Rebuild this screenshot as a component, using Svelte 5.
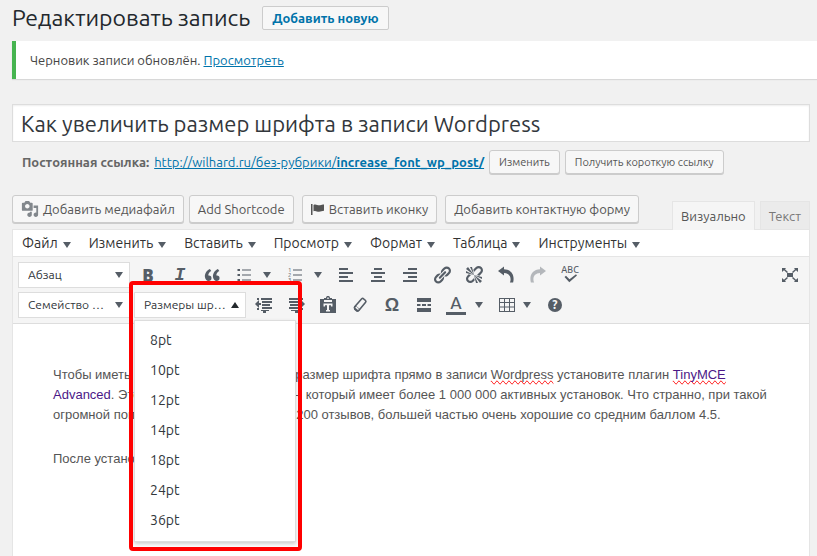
<script lang="ts">
  let title = $state('Как увеличить размер шрифта в записи Wordpress');
  let sizesOpen = $state(true);

  const menus = ['Файл', 'Изменить', 'Вставить', 'Просмотр', 'Формат', 'Таблица', 'Инструменты'];
  const sizes = ['8pt', '10pt', '12pt', '14pt', '18pt', '24pt', '36pt'];
</script>

{#snippet tool(name: string, label: string)}
  <button class="tool {name}" type="button" aria-label={label}>
    {#if name === 'bold'}
      <b>B</b>
    {:else if name === 'italic'}
      <i>I</i>
    {:else if name === 'omega'}
      <span>Ω</span>
    {:else}
      <svg viewBox="0 0 20 20" width="20" height="20" aria-hidden="true">
        {#if name === 'quote'}
          <path d="M9.49 13.22c0-.74-.2-1.38-.61-1.9-.62-.78-1.83-.88-2.53-.72-.29-1.65 1.11-3.75 2.92-4.65L7.88 4c-2.73 1.3-5.42 4.28-4.96 8.05C3.21 14.43 4.59 16 6.54 16c.85 0 1.56-.25 2.12-.75s.83-1.18.83-2.03zm8.05 0c0-.74-.2-1.38-.61-1.9-.63-.78-1.83-.88-2.53-.72-.29-1.65 1.11-3.75 2.92-4.65L15.93 4c-2.73 1.3-5.41 4.28-4.95 8.05.29 2.38 1.66 3.95 3.61 3.95.85 0 1.56-.25 2.12-.75s.83-1.18.83-2.03z" />
        {:else if name === 'ul'}
          <path d="M3.500 4h2.500v2H3.500zM3.500 9h2.500v2H3.500zM3.500 14h2.500v2H3.500zM8 4.500h9v1H8zM8 9.500h9v1H8zM8 14.500h9v1H8z" />
        {:else if name === 'ol'}
          <path d="M8 4.500h9v1H8zM8 9.500h9v1H8zM8 14.500h9v1H8z" />
          <text x="3" y="7">1</text><text x="3" y="12">2</text><text x="3" y="17">3</text>
        {:else if name === 'left'}
          <path d="M3 3h9v2H3zM3 7h14v2H3zM3 11h9v2H3zM3 15h14v2H3z" />
        {:else if name === 'center'}
          <path d="M6 3h8v2H6zM3 7h14v2H3zM6 11h8v2H6zM3 15h14v2H3z" />
        {:else if name === 'right'}
          <path d="M8 3h9v2H8zM3 7h14v2H3zM8 11h9v2H8zM3 15h14v2H3z" />
        {:else if name === 'link'}
          <path d="M17.74 2.76c1.68 1.69 1.68 4.41 0 6.1l-1.53 1.52c-1.12 1.12-2.7 1.47-4.14 1.09l2.62-2.61.76-.77.76-.76c.84-.84.84-2.2 0-3.04-.84-.85-2.2-.85-3.04 0l-.77.76-3.38 3.38c-.37-1.44-.02-3.02 1.1-4.14l1.52-1.53c1.69-1.68 4.42-1.68 6.1 0zM8.59 13.43l5.34-5.34c.42-.42.42-1.1 0-1.52-.44-.43-1.13-.39-1.53 0l-5.33 5.34c-.42.42-.42 1.1 0 1.52.44.43 1.13.39 1.52 0zm-.76 2.29l4.14-4.15c.38 1.44.03 3.02-1.09 4.14l-1.52 1.53c-1.69 1.68-4.41 1.68-6.1 0-1.68-1.68-1.68-4.42 0-6.1l1.53-1.52c1.12-1.12 2.7-1.47 4.14-1.1l-4.14 4.15c-.85.84-.85 2.2 0 3.05.84.84 2.2.84 3.04 0z" />
        {:else if name === 'unlink'}
          <path d="M17.74 2.26c1.68 1.69 1.68 4.41 0 6.1l-1.53 1.52c-.32.33-.69.58-1.08.77L13 10l1.69-1.64.76-.77.76-.76c.84-.84.84-2.2 0-3.04-.84-.85-2.2-.85-3.04 0l-.77.76-.76.76L10 7l-.65-2.14c.19-.38.44-.75.77-1.07l1.52-1.53c1.69-1.68 4.42-1.68 6.1 0zM2 4l8 6-6-8zm4-2l4 8-2-8H6zM2 6l8 4-8-2V6zm7.36 7.69L10 13l.74 2.35-1.38 1.39c-1.69 1.68-4.41 1.68-6.1 0-1.68-1.68-1.68-4.42 0-6.1l1.39-1.38L7 10l-.69.64-1.52 1.53c-.85.84-.85 2.2 0 3.04.84.85 2.2.85 3.04 0zM18 16l-8-6 6 8zm-4 2l-4-8 2 8h2zm4-4l-8-4 8 2v2z" />
        {:else if name === 'undo'}
          <path d="M2 6l6-4.5v2.8c6 .2 9.6 4 9.6 9.7 0 1.2-.2 2.3-.5 3.4h-3.2c.5-1.1.7-2 .7-3.2 0-3.5-2.4-6-6.6-6.2v2.5z" />
        {:else if name === 'redo'}
          <path d="M18 6l-6-4.5v2.8c-6 .2-9.6 4-9.6 9.7 0 1.2.2 2.3.5 3.4h3.2c-.5-1.1-.7-2-.7-3.2 0-3.5 2.4-6 6.6-6.2v2.5z" />
        {:else if name === 'spell'}
          <text x="10" y="8" text-anchor="middle">ABC</text>
          <path d="M4.500 12l1.500-1.200 3.500 3.500 6.500-5 1 1.300-7.700 6.600z" />
        {:else if name === 'full'}
          <path d="M7 8h6v4H7zM2 3h4L5 4.200 8 7 7 8 4 5.200 2 7zM18 3h-4l1 1.200L12 7l1 1 3-2.800L18 7zM2 17h4l-1-1.200L8 13l-1-1-3 2.800L2 13zM18 17h-4l1-1.200L12 13l1-1 3 2.800 2-1.800z" />
        {:else if name === 'outdent'}
          <path d="M3 3h2v2H3zM7 3h11v2H7zM8 6h10v2H8zM8 9h8v2H8zM8 12h10v2H8zM3 13h2v2H3zM7 15h8v1H7zM9 16h3v2H9zM1 9l4-4v3h2v2H5v3z" />
        {:else if name === 'indent'}
          <path d="M3 3h11v2H3zM15 3h2v2h-2zM3 6h9v2H3zM4 9h8v2H4zM3 12h11v2H3zM15 13h2v2h-2zM5 15h7v1H5zM9 16h3v2H9zM19 9l-4-4v3h-3v2h3v3z" />
        {:else if name === 'paste'}
          <path fill-rule="evenodd" d="M2 4h4V3h2C8 1.500 8.800 1 10 1s2 .5 2 2h2v1h4v14H2zM6 5v2h8V5zM9.300 2.500h1.400v1.400H9.300zM5.500 8.500v3H7v-1.200h2V15H8v1.500h4V15h-1v-4.700h2v1.200h1.500v-3z" />
        {:else if name === 'eraser'}
          <path class="line" d="M11.700 3.800c.6-.6 1.300-.6 1.900 0l1.900 1.700c.6.6.6 1.200.1 1.800l-6.800 8.200c-.6.6-1.200.6-1.800.1l-2.200-2c-.6-.6-.6-1.200-.1-1.800z" />
          <path d="M4 12l1.500-1.500 4.700 3.700-2 2.500H6.500L4 14.500z" />
          <path class="shine" d="M5.800 12.200l2.700 2.300" />
        {:else if name === 'more'}
          <path d="M3 3h14v4H3zM3 9h3.500v2H3zM8 9h4v2H8zM13.500 9H17v2h-3.500zM3 13h14v4H3z" />
        {:else if name === 'color'}
          <text x="10" y="14" text-anchor="middle">A</text>
          <path d="M0 17h20v3H0z" />
        {:else if name === 'table'}
          <path fill-rule="evenodd" d="M2 3h16v14H2zM3 4v3h4V4zM8 4v3h4V4zM13 4v3h4V4zM3 8v3.500h4V8zM8 8v3.500h4V8zM13 8v3.500h4V8zM3 12.500V16h4v-3.500zM8 12.500V16h4v-3.500zM13 12.500V16h4v-3.500z" />
        {:else if name === 'help'}
          <circle cx="10" cy="10" r="7" />
          <text x="10" y="14" text-anchor="middle">?</text>
        {/if}
      </svg>
    {/if}
  </button>
{/snippet}

{#snippet split(name: string, label: string)}
  <span class="split {name}-split">
    {@render tool(name, label)}
    <button class="more-arrow" type="button" aria-label="{label}: варианты"><span class="caret"></span></button>
  </span>
{/snippet}

<div class="wrap">
  <header>
    <h1>Редактировать запись</h1>
    <a class="page-action" href="#new">Добавить новую</a>
  </header>

  <div class="notice">
    Черновик записи обновлён. <a href="#preview">Просмотреть</a>
  </div>

  <main>
    <input class="title" type="text" aria-label="Заголовок" bind:value={title} />

    <div class="permalink">
      <strong>Постоянная ссылка:</strong>
      <a href="#post">http://wilhard.ru/без-рубрики/<b>increase_font_wp_post/</b></a>
      <button class="button small" type="button">Изменить</button>
      <button class="button small" type="button">Получить короткую ссылку</button>
    </div>

    <div class="editor-head">
      <div class="media">
        <button class="button" type="button">
          <svg class="cam" viewBox="0 0 20 20" width="18" height="18" aria-hidden="true">
            <path d="M13 11V4c0-.55-.45-1-1-1h-1.670L9 1H5L3.670 3H2c-.55 0-1 .45-1 1v7c0 .55.45 1 1 1h10c.55 0 1-.45 1-1zM7 4.500c1.380 0 2.500 1.120 2.500 2.500S8.380 9.500 7 9.500 4.500 8.380 4.500 7 5.620 4.500 7 4.500zM14 6h5v10.500c0 1.380-1.120 2.500-2.500 2.500S14 17.880 14 16.500s1.120-2.500 2.500-2.500c.17 0 .34.02.5.05V9h-3V6zm-4 8.050V13h2v3.500c0 1.380-1.120 2.500-2.500 2.500S7 17.880 7 16.500 8.120 14 9.500 14c.17 0 .34.02.5.05z" />
          </svg>
          Добавить медиафайл
        </button>
        <button class="button" type="button">Add Shortcode</button>
        <button class="button spaced" type="button">
          <svg viewBox="0 0 14 14" width="14" height="14" aria-hidden="true">
            <path d="M0 2h1.500v11H0zM2.500 3C5 1.500 6.500 3.800 9 3.300c1.500-.2 2.500-.8 4-.8v6.300c-2 0-3 .9-5 .9-2.200 0-3.300-1.500-5.500-.4z" />
          </svg>
          Вставить иконку
        </button>
        <button class="button spaced" type="button">Добавить контактную форму</button>
      </div>
      <div class="tabs">
        <button class="tab active" type="button">Визуально</button>
        <button class="tab" type="button">Текст</button>
      </div>
    </div>

    <div class="editor">
      <nav class="menubar">
        {#each menus as m}
          <button type="button">{m}<span class="caret"></span></button>
        {/each}
      </nav>

      <div class="toolbar">
        <div class="row">
          <span class="select">
            <select aria-label="Формат абзаца"><option>Абзац</option></select>
            <span class="caret"></span>
          </span>
          {@render tool('bold', 'Жирный')}
          {@render tool('italic', 'Курсив')}
          {@render tool('quote', 'Цитата')}
          {@render split('ul', 'Маркированный список')}
          {@render split('ol', 'Нумерованный список')}
          {@render tool('left', 'По левому краю')}
          {@render tool('center', 'По центру')}
          {@render tool('right', 'По правому краю')}
          {@render tool('link', 'Вставить ссылку')}
          {@render tool('unlink', 'Удалить ссылку')}
          {@render tool('undo', 'Отменить')}
          {@render tool('redo', 'Повторить')}
          {@render tool('spell', 'Проверка орфографии')}
          {@render tool('full', 'Во весь экран')}
        </div>
        <div class="row">
          <span class="select">
            <select aria-label="Семейство шрифтов"><option>Семейство …</option></select>
            <span class="caret"></span>
          </span>
          <div class="sizes">
            <button class="sizes-btn" type="button" aria-haspopup="listbox" aria-expanded={sizesOpen} onclick={() => (sizesOpen = !sizesOpen)}>
              Размеры шр…<span class="caret up"></span>
            </button>
            {#if sizesOpen}
              <div class="sizes-menu">
                {#each sizes as s}
                  <button type="button" onclick={() => (sizesOpen = false)}>{s}</button>
                {/each}
              </div>
            {/if}
            <div class="frame"></div>
          </div>
          {@render tool('outdent', 'Уменьшить отступ')}
          {@render tool('indent', 'Увеличить отступ')}
          {@render tool('paste', 'Вставить как текст')}
          {@render tool('eraser', 'Очистить форматирование')}
          {@render tool('omega', 'Произвольный символ')}
          {@render tool('more', 'Тег «Далее»')}
          {@render split('color', 'Цвет текста')}
          {@render split('table', 'Таблица')}
          {@render tool('help', 'Горячие клавиши')}
        </div>
      </div>

      <article>
        <p>
          Чтобы иметь возможность увеличивать размер шрифта прямо в записи <span class="typo">Wordpress</span>
          установите плагин <a href="#tinymce"><span class="typo">TinyMCE</span> Advanced</a>. Это популярный плагин для –, который имеет
          более 1 000 000 активных установок. Что странно, при такой огромной популярности он имеет почти 200 отзывов,
          большей частью очень хорошие со средним баллом 4.5.
        </p>
        <p>После установки</p>
      </article>
    </div>
  </main>
</div>

<style>
  :global(body) {
    background: #f1f1f1;
    overflow: hidden;
  }

  .wrap {
    padding-left: 12px;
    font: 13px/18px Ubuntu, "Noto Sans", sans-serif;
    color: #444;
  }

  button, input, select {
    font: inherit;
    color: inherit;
    margin: 0;
  }

  button {
    cursor: pointer;
  }

  a {
    color: #0073aa;
  }

  header {
    display: flex;
    align-items: center;
    gap: 12px;
    height: 36px;
    padding-bottom: 5px;
  }

  h1 {
    margin: 0;
    font-size: 23px;
    line-height: 36px;
    font-weight: 400;
    color: #23282d;
  }

  .page-action {
    box-sizing: border-box;
    height: 24px;
    padding: 0 9px;
    border: 1px solid #ccc;
    border-radius: 2px;
    background: #f7f7f7;
    line-height: 22px;
    font-weight: 700;
    text-decoration: none;
  }

  .notice {
    padding: 10px 14px;
    border-left: 4px solid #46b450;
    background: #fff;
    box-shadow: 0 1px 1px rgba(0, 0, 0, 0.1);
  }

  main {
    margin: 25px 7px 0 0;
  }

  .title {
    box-sizing: border-box;
    display: block;
    width: 100%;
    height: 38px;
    padding: 0 8px;
    border: 1px solid #ddd;
    background: #fff;
    box-shadow: inset 0 1px 2px rgba(0, 0, 0, 0.07);
    color: #32373c;
    font-size: 22px;
    outline: none;
  }

  .permalink {
    display: flex;
    align-items: center;
    gap: 5px;
    height: 24px;
    padding: 8px 10px 0;
    white-space: nowrap;
  }

  .permalink strong {
    color: #666;
  }

  .button {
    box-sizing: border-box;
    display: flex;
    align-items: center;
    gap: 4px;
    height: 28px;
    padding: 0 8px;
    border: 1px solid #ccc;
    border-radius: 3px;
    background: #f7f7f7;
    box-shadow: 0 1px 0 #ccc;
    color: #555;
    white-space: nowrap;
  }

  .button svg {
    fill: #555;
  }

  .button .cam {
    fill: #82878c;
  }

  .button.small {
    height: 24px;
    padding: 0 9px;
    font-size: 11px;
  }

  .editor-head {
    display: flex;
    justify-content: space-between;
    align-items: flex-end;
    padding-top: 21px;
  }

  .media {
    display: flex;
    gap: 5px;
    padding-bottom: 6px;
  }

  .spaced {
    margin-left: 3px;
  }

  .tabs {
    display: flex;
    gap: 5px;
  }

  .tab {
    box-sizing: border-box;
    height: 28px;
    padding: 0 8px;
    border: 1px solid #e5e5e5;
    border-bottom: 0;
    background: #ebebeb;
    color: #777;
  }

  .tab.active {
    height: 29px;
    margin-bottom: -1px;
    background: #f5f5f5;
    color: #555;
    z-index: 1;
  }

  .editor {
    border: 1px solid #e5e5e5;
    background: #fff;
  }

  .menubar {
    display: flex;
    height: 26px;
    gap: 4px;
    padding-left: 2px;
    border-bottom: 1px solid #e5e5e5;
  }

  .menubar button {
    display: flex;
    align-items: center;
    gap: 5px;
    padding: 0 7px;
    border: 0;
    background: none;
    color: #333;
    font-size: 14px;
  }

  .caret {
    border: 4px solid transparent;
    border-top: 6px solid #555d66;
    border-bottom: 0;
  }

  .menubar .caret {
    margin-top: 4px;
  }

  .caret.up {
    border-top: 0;
    border-bottom: 6px solid #23282d;
  }

  .toolbar {
    padding: 3px 3px 3px 5px;
    border-bottom: 1px solid #ddd;
    background: #f5f5f5;
  }

  .row {
    display: flex;
    align-items: center;
    height: 30px;
  }

  .select {
    display: grid;
    align-items: center;
    width: 112px;
    margin-right: 2px;
  }

  .select > * {
    grid-area: 1 / 1;
  }

  .select .caret {
    justify-self: end;
    margin-right: 7px;
    pointer-events: none;
  }

  select, .sizes-btn {
    box-sizing: border-box;
    width: 112px;
    height: 26px;
    padding: 0 6px 0 9px;
    border: 1px solid #ddd;
    border-radius: 0;
    background: #fff;
    color: #32373c;
    font-size: 12px;
    appearance: none;
  }

  .sizes {
    position: relative;
    margin: 0 2px;
  }

  .sizes-btn {
    display: flex;
    align-items: center;
    justify-content: space-between;
    white-space: nowrap;
  }

  .sizes-menu {
    position: absolute;
    z-index: 2;
    top: 28px;
    left: 0;
    box-sizing: border-box;
    width: 162px;
    padding: 4px 0 6px;
    border: 1px solid #ddd;
    background: #fff;
    box-shadow: 0 2px 4px rgba(0, 0, 0, 0.2);
  }

  .sizes-menu button {
    display: block;
    width: 100%;
    height: 30px;
    padding: 0 15px;
    border: 0;
    background: none;
    color: #32373c;
    text-align: left;
    font-size: 14px;
  }

  .frame {
    position: absolute;
    z-index: 3;
    top: -11px;
    left: -5px;
    box-sizing: border-box;
    width: 173px;
    height: 270px;
    border: 4px solid #f00;
    border-radius: 4px;
    pointer-events: none;
  }

  .tool {
    display: flex;
    align-items: center;
    justify-content: center;
    width: 32px;
    height: 28px;
    padding: 0;
    border: 0;
    background: none;
    color: #555d66;
  }

  .tool svg {
    fill: currentColor;
    overflow: visible;
  }

  .bold {
    font: 700 17px "Noto Sans", sans-serif;
  }

  .italic {
    font: 700 18px "Liberation Mono", monospace;
  }

  .omega {
    font: 700 18px "Liberation Sans", sans-serif;
  }

  .ol text {
    font-size: 6px;
  }

  .spell text {
    font-size: 9px;
    font-weight: 500;
  }

  .color text {
    font-size: 17px;
    font-weight: 500;
  }

  .help text {
    fill: #f5f5f5;
    font-size: 12px;
    font-weight: 700;
  }

  .line {
    fill: none;
    stroke: currentColor;
    stroke-width: 1.6;
  }

  .shine {
    stroke: #f5f5f5;
    stroke-width: 1.6;
  }

  .redo {
    opacity: 0.4;
  }

  .full {
    margin-left: auto;
  }

  .split {
    display: flex;
    padding-right: 5px;
  }

  .more-arrow {
    display: flex;
    align-items: center;
    justify-content: center;
    width: 14px;
    padding: 0;
    border: 0;
    background: none;
  }

  .table-split {
    padding-left: 3px;
  }

  .table {
    width: 26px;
  }

  article {
    padding: 41px 40px 80px;
    color: #555;
    font: 13px/20px "Liberation Sans", sans-serif;
  }

  p {
    margin: 0 0 24px;
  }

  article a {
    color: #4b1787;
    text-decoration: none;
  }

  .typo {
    text-decoration: underline dotted #e00 2px;
    text-decoration: spelling-error;
    text-decoration-skip-ink: none;
  }
</style>
